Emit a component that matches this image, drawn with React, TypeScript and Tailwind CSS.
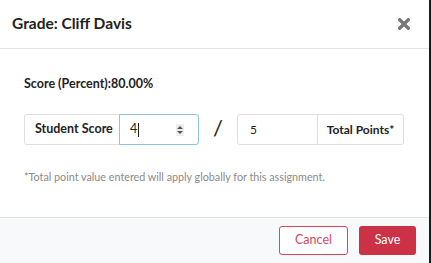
import React from 'react';

export default function App() {
  return (
    <div className="flex w-[431px] h-[263px] bg-[#1a1a1a] overflow-hidden" style={{ fontFamily: 'Lato, "Open Sans", sans-serif' }}>
      <div className="flex flex-col w-[429px] h-full bg-white">
        {/* header */}
        <div className="flex items-center justify-between h-[49px] pl-3 pr-[19px] border-b border-[#e3e3e3]">
          <h2 className="text-[15.5px] font-bold text-[#222]">Grade: Cliff Davis</h2>
          <svg width="12" height="12" viewBox="0 0 12 12">
            <path d="M1.7 1.7 L10.3 10.3 M10.3 1.7 L1.7 10.3" stroke="#777" strokeWidth="3.4" strokeLinecap="round" />
          </svg>
        </div>

        {/* body */}
        <div className="flex-1 flex flex-col px-6 pt-[27px]">
          <p className="text-[12.5px] font-bold text-[#222] leading-[16px]">Score (Percent):80.00%</p>

          <div className="flex items-center mt-[22px] h-[31px]">
            <div className="flex items-center h-full pl-[10px] border border-[#dedede] rounded-l-[3px] bg-white text-[12.5px] font-bold text-[#222] w-[96px] whitespace-nowrap">
              Student Score
            </div>
            <div className="flex items-center justify-between h-full w-[80px] pl-[10px] pr-[14px] border border-[#8ec3e4] rounded-r-[3px] -ml-px">
              <span className="flex items-center text-[12.5px] text-[#222]">
                4<span className="inline-block w-px h-[14px] bg-[#222] ml-px" />
              </span>
              <span className="flex flex-col items-center justify-center gap-[2px] w-[8px] h-[12px] bg-[#eeeeee]">
                <span className="block w-0 h-0 border-l-[3px] border-r-[3px] border-b-[3px] border-l-transparent border-r-transparent border-b-[#555]" />
                <span className="block w-0 h-0 border-l-[3px] border-r-[3px] border-t-[3px] border-l-transparent border-r-transparent border-t-[#555]" />
              </span>
            </div>
            <span className="w-[38px] text-center text-[22px] leading-none text-[#222] -mt-[3px]">/</span>
            <div className="flex items-center h-full w-[81px] pl-[12px] border border-[#dedede] rounded-l-[3px] text-[12px] text-[#222]">
              5
            </div>
            <div className="flex items-center justify-center h-full w-[87px] border border-[#dedede] rounded-r-[3px] -ml-px text-[12px] font-bold text-[#222] whitespace-nowrap">
              Total Points*
            </div>
          </div>

          <p className="mt-[24px] text-[10.75px] text-[#8a8a8a]">*Total point value entered will apply globally for this assignment.</p>
        </div>

        {/* footer */}
        <div className="flex items-center justify-end gap-[11px] h-[46px] pr-[13px] border-t border-[#e3e3e3] bg-[#f8f9fa]">
          <button className="w-[69px] h-[29px] rounded-[3px] border border-[#d8475b] bg-white text-[12.5px] text-[#d8475b]">
            Cancel
          </button>
          <button className="w-[57px] h-[29px] rounded-[3px] bg-[#cc3145] text-[12.5px] text-white">
            Save
          </button>
        </div>
      </div>
    </div>
  );
}
